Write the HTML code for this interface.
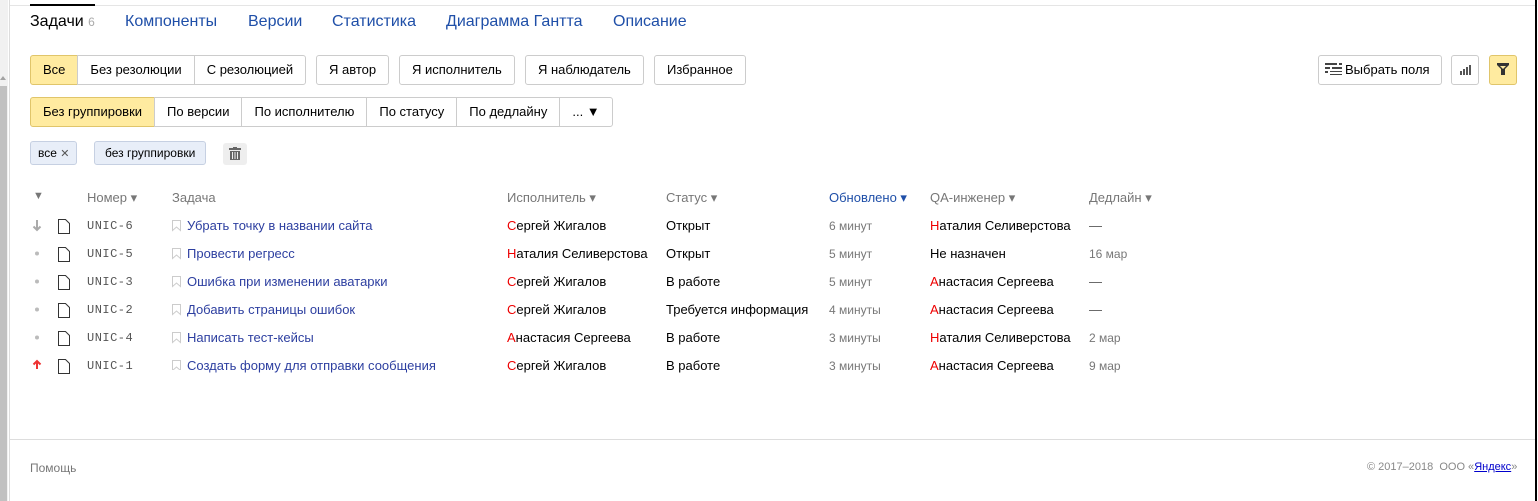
<!DOCTYPE html>
<html><head><meta charset="utf-8"><style>
*{box-sizing:border-box;margin:0;padding:0}
body{width:1538px;height:501px;background:#fff;font-family:"Liberation Sans",Arial,sans-serif;position:relative;overflow:hidden;color:#000}
.sb{position:absolute;left:0;top:0;width:8px;height:501px;background:#f1f1f1}
.sb .th{position:absolute;left:0;top:86px;width:7px;bottom:0;background:#c1c1c1}
.sb .ar{position:absolute;left:0;top:76px;width:0;height:0;border-left:3px solid transparent;border-right:3px solid transparent;border-bottom:4px solid #a3a3a3}
.vl{position:absolute;left:9px;top:0;width:1px;height:501px;background:#ddd}
.rl{position:absolute;left:1535px;top:0;width:2px;height:501px;background:#000}
.tl{position:absolute;left:10px;top:5px;width:1525px;height:1px;background:#e5e5e5}
.a{position:absolute;white-space:nowrap}
.tabs{top:13px;font-size:16px}
.tabs span{position:absolute;color:#1f4fa8}
.ul{position:absolute;left:30px;top:4px;width:65px;height:2px;background:#000}
.bg{position:absolute;display:flex;height:30px;font-size:13px}
.bg div{border:1px solid #ccc;margin-left:-1px;padding:0 12px;line-height:28px;background:#fff}
.bg div:first-child{border-radius:3px 0 0 3px;margin-left:0}
.bg div:last-child{border-radius:0 3px 3px 0}
.bg div.only{border-radius:3px}
.bg div.y{background:#ffeba0;border-color:#e0c56a}
.chip{position:absolute;height:24px;top:141px;background:#e8eef8;border:1px solid #c6d0e2;border-radius:3px;font-size:12px;line-height:22px;padding:0 8px}
.hd{position:absolute;top:190px;font-size:13px;color:#777}
.r{position:absolute;font-size:13px}
.lnk{color:#2d3fa0}
.mono{font-family:"Liberation Mono",monospace;font-size:12px;color:#555;letter-spacing:0.5px}
.g{color:#777;font-size:12px}
.red{color:#e00}
.foot{position:absolute;left:10px;top:439px;width:1525px;height:1px;background:#ddd}
</style></head><body>
<div class="sb"><div class="ar"></div><div class="th"></div></div>
<div class="vl"></div><div class="tl"></div><div class="rl"></div>
<div class="ul"></div>
<div class="a tabs" style="left:0;width:800px">
<span style="left:30px;color:#000">Задачи <small style="color:#aaa;font-size:12px">6</small></span>
<span style="left:125px">Компоненты</span><span style="left:248px">Версии</span><span style="left:332px">Статистика</span><span style="left:446px">Диаграмма Гантта</span><span style="left:613px">Описание</span>
</div>
<div class="bg" style="left:30px;top:55px"><div class="y">Все</div><div>Без резолюции</div><div>С резолюцией</div></div>
<div class="bg" style="left:316px;top:55px"><div class="only">Я автор</div></div>
<div class="bg" style="left:399px;top:55px"><div class="only">Я исполнитель</div></div>
<div class="bg" style="left:525px;top:55px"><div class="only">Я наблюдатель</div></div>
<div class="bg" style="left:654px;top:55px"><div class="only">Избранное</div></div>
<div class="bg" style="left:1318px;top:55px"><div class="only" style="padding:0 11px 0 6px"><svg width="20" height="12" style="vertical-align:-1px"><g fill="#444"><rect x="0" y="0" width="12" height="2"/><rect x="14" y="0" width="3" height="2"/><rect x="0" y="4" width="5" height="2"/><rect x="7" y="4" width="10" height="2"/><rect x="0" y="8" width="3" height="2"/><rect x="5" y="8" width="12" height="1"/><rect x="5" y="11" width="12" height="1"/></g></svg>Выбрать поля</div></div>
<div class="bg" style="left:1451px;top:55px"><div class="only" style="width:28px;padding:0;text-align:center"><svg width="12" height="10" style="vertical-align:-1px"><g fill="#555"><rect x="1" y="6" width="2" height="4"/><rect x="4" y="4" width="2" height="6"/><rect x="7" y="2" width="2" height="8"/><rect x="10" y="0" width="2" height="10"/></g></svg></div></div>
<div class="bg" style="left:1489px;top:55px"><div class="only y" style="width:28px;padding:0;text-align:center"><svg width="12" height="12" style="vertical-align:-1px"><path d="M0 0H12V2L8 6V12H4V6L0 2Z" fill="#333"/><path d="M3 3H9L6 6Z" fill="#ffeba0"/></svg></div></div>
<div class="bg" style="left:30px;top:97px"><div class="y">Без группировки</div><div>По версии</div><div>По исполнителю</div><div>По статусу</div><div>По дедлайну</div><div>... ▼</div></div>
<div class="chip" style="left:30px;padding:0 7px">все <span style="color:#555;font-size:11px">✕</span></div>
<div class="chip" style="left:94px;padding:0 10px">без группировки</div>
<div class="a" style="left:223px;top:143px;width:24px;height:22px;background:#eee;border-radius:3px;text-align:center"><svg width="12" height="13" style="margin-top:4px"><g fill="#666"><rect x="0" y="1" width="12" height="2"/><rect x="4" y="0" width="4" height="1"/><path d="M1 4H11V13H1Z"/></g><g fill="#eee"><rect x="3" y="5" width="1" height="7"/><rect x="5.5" y="5" width="1" height="7"/><rect x="8" y="5" width="1" height="7"/></g></svg></div>
<div class="hd" style="left:33px;font-size:11px">▼</div>
<div class="hd" style="left:87px">Номер ▾</div>
<div class="hd" style="left:172px">Задача</div>
<div class="hd" style="left:507px">Исполнитель ▾</div>
<div class="hd" style="left:666px">Статус ▾</div>
<div class="hd" style="left:829px;color:#1f4fa8">Обновлено ▾</div>
<div class="hd" style="left:930px">QA-инженер ▾</div>
<div class="hd" style="left:1089px">Дедлайн ▾</div>

<svg class="a" style="left:32px;top:219px" width="10" height="150"><g stroke="#aaa" stroke-width="2" fill="none"><path d="M5 1V11M1.5 7.5L5 11L8.5 7.5"/></g><g fill="#bbb"><circle cx="5" cy="34.5" r="2"/><circle cx="5" cy="62.5" r="2"/><circle cx="5" cy="90.5" r="2"/><circle cx="5" cy="118.5" r="2"/></g><g stroke="#e33" stroke-width="2" fill="none"><path d="M5 152V142M1.5 145.5L5 142L8.5 145.5"/></g></svg>

<svg class="a" style="left:57px;top:218px" width="14" height="160"><g fill="none" stroke="#333" stroke-width="1"><path d="M1.5 1.5H8.5L12.5 5.5V15.5H1.5Z"/><path d="M1.5 29.5H8.5L12.5 33.5V43.5H1.5Z"/><path d="M1.5 57.5H8.5L12.5 61.5V71.5H1.5Z"/><path d="M1.5 85.5H8.5L12.5 89.5V99.5H1.5Z"/><path d="M1.5 113.5H8.5L12.5 117.5V127.5H1.5Z"/><path d="M1.5 141.5H8.5L12.5 145.5V155.5H1.5Z"/></g></svg>
<svg class="a" style="left:172px;top:220px" width="10" height="150"><g fill="none" stroke="#ccc"><path d="M0.5 0.5H8.5V10.5L4.5 7L0.5 10.5Z"/><path d="M0.5 28.5H8.5V38.5L4.5 35L0.5 38.5Z"/><path d="M0.5 56.5H8.5V66.5L4.5 63L0.5 66.5Z"/><path d="M0.5 84.5H8.5V94.5L4.5 91L0.5 94.5Z"/><path d="M0.5 112.5H8.5V122.5L4.5 119L0.5 122.5Z"/><path d="M0.5 140.5H8.5V150.5L4.5 147L0.5 150.5Z"/></g></svg>

<div class="r mono" style="left:87px;top:219px">UNIC-6</div>
<div class="r mono" style="left:87px;top:247px">UNIC-5</div>
<div class="r mono" style="left:87px;top:275px">UNIC-3</div>
<div class="r mono" style="left:87px;top:303px">UNIC-2</div>
<div class="r mono" style="left:87px;top:331px">UNIC-4</div>
<div class="r mono" style="left:87px;top:359px">UNIC-1</div>

<div class="r lnk" style="left:187px;top:218px">Убрать точку в названии сайта</div>
<div class="r lnk" style="left:187px;top:246px">Провести регресс</div>
<div class="r lnk" style="left:187px;top:274px">Ошибка при изменении аватарки</div>
<div class="r lnk" style="left:187px;top:302px">Добавить страницы ошибок</div>
<div class="r lnk" style="left:187px;top:330px">Написать тест-кейсы</div>
<div class="r lnk" style="left:187px;top:358px">Создать форму для отправки сообщения</div>

<div class="r" style="left:507px;top:218px"><span class="red">С</span>ергей Жигалов</div>
<div class="r" style="left:507px;top:246px"><span class="red">Н</span>аталия Селиверстова</div>
<div class="r" style="left:507px;top:274px"><span class="red">С</span>ергей Жигалов</div>
<div class="r" style="left:507px;top:302px"><span class="red">С</span>ергей Жигалов</div>
<div class="r" style="left:507px;top:330px"><span class="red">А</span>настасия Сергеева</div>
<div class="r" style="left:507px;top:358px"><span class="red">С</span>ергей Жигалов</div>

<div class="r" style="left:666px;top:218px">Открыт</div>
<div class="r" style="left:666px;top:246px">Открыт</div>
<div class="r" style="left:666px;top:274px">В работе</div>
<div class="r" style="left:666px;top:302px">Требуется информация</div>
<div class="r" style="left:666px;top:330px">В работе</div>
<div class="r" style="left:666px;top:358px">В работе</div>

<div class="r g" style="left:829px;top:219px">6 минут</div>
<div class="r g" style="left:829px;top:247px">5 минут</div>
<div class="r g" style="left:829px;top:275px">5 минут</div>
<div class="r g" style="left:829px;top:303px">4 минуты</div>
<div class="r g" style="left:829px;top:331px">3 минуты</div>
<div class="r g" style="left:829px;top:359px">3 минуты</div>

<div class="r" style="left:930px;top:218px"><span class="red">Н</span>аталия Селиверстова</div>
<div class="r" style="left:930px;top:246px">Не назначен</div>
<div class="r" style="left:930px;top:274px"><span class="red">А</span>настасия Сергеева</div>
<div class="r" style="left:930px;top:302px"><span class="red">А</span>настасия Сергеева</div>
<div class="r" style="left:930px;top:330px"><span class="red">Н</span>аталия Селиверстова</div>
<div class="r" style="left:930px;top:358px"><span class="red">А</span>настасия Сергеева</div>

<div class="r" style="left:1089px;top:218px;color:#555">—</div>
<div class="r g" style="left:1089px;top:247px">16 мар</div>
<div class="r" style="left:1089px;top:274px;color:#555">—</div>
<div class="r" style="left:1089px;top:302px;color:#555">—</div>
<div class="r g" style="left:1089px;top:331px">2 мар</div>
<div class="r g" style="left:1089px;top:359px">9 мар</div>

<div class="foot"></div>
<div class="a" style="left:30px;top:461px;font-size:12px;color:#777">Помощь</div>
<div class="a" style="left:1367px;top:461px;font-size:11px;color:#888">© 2017–2018 &nbsp;ООО «<span style="color:#00c;text-decoration:underline">Яндекс</span>»</div>
</body></html>
